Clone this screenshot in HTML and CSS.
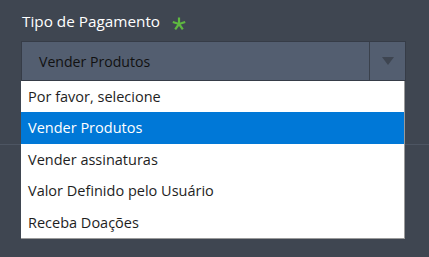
FILE: index.html
```html
<!DOCTYPE html>
<html>
<head>
<meta charset="utf-8">
<link rel="stylesheet" href="styles.css">
</head>
<body>
<div class="page">
  <div class="field">
    <div class="label">Tipo de Pagamento
      <svg class="req" width="14" height="14" viewBox="-7 -7 14 14">
        <g stroke="#5fb840" stroke-width="2.2" stroke-linecap="butt">
          <line x1="0" y1="0" x2="0" y2="-6.5"/>
          <line x1="0" y1="0" x2="6.2" y2="-2"/>
          <line x1="0" y1="0" x2="3.8" y2="5.3"/>
          <line x1="0" y1="0" x2="-3.8" y2="5.3"/>
          <line x1="0" y1="0" x2="-6.2" y2="-2"/>
        </g>
      </svg>
    </div>
    <div class="select-wrap">
      <div class="select">
        <span class="value">Vender Produtos</span>
        <span class="arrow"><svg width="12" height="8" viewBox="0 0 12 8"><polygon points="0,0 12,0 6,8" fill="#3e4551"/></svg></span>
      </div>
      <ul class="menu">
        <li>Por favor, selecione</li>
        <li class="active">Vender Produtos</li>
        <li>Vender assinaturas</li>
        <li>Valor Definido pelo Usuário</li>
        <li>Receba Doações</li>
      </ul>
    </div>
  </div>
  <div class="sep"></div>
</div>
</body>
</html>
```
FILE: styles.css
```css
html, body {
  margin: 0;
  padding: 0;
  background: #3f4651;
  width: 429px;
  height: 257px;
  overflow: hidden;
  font-family: "Open Sans", "Noto Sans", sans-serif;
}
.page {
  padding-top: 10px;
}
.field {
  padding-left: 21px;
}
.label {
  color: #ffffff;
  font-size: 15.3px;
  line-height: 22px;
  height: 31px;
  padding-left: 1px;
  display: flex;
  align-items: flex-start;
}
.req {
  margin-left: 12px;
  margin-top: 7px;
}
.select-wrap {
  position: relative;
  width: 385px;
}
.select {
  height: 38px;
  background: #535e70;
  border: 1px solid #363c47;
  display: flex;
  align-items: center;
}
.value {
  flex: 1;
  padding-left: 17px;
  font-size: 14.1px;
  color: #111;
}
.arrow {
  width: 35px;
  height: 38px;
  border-left: 1px solid #3a414c;
  display: flex;
  align-items: center;
  justify-content: center;
}
.menu {
  position: absolute;
  left: 0;
  top: 40px;
  width: 383px;
  margin: 0;
  padding: 0;
  list-style: none;
  background: #ffffff;
  border-right: 1px solid #9a9a9a;
  border-bottom: 1px solid #9a9a9a;
  z-index: 2;
}
.menu li {
  height: 31.4px;
  line-height: 31.4px;
  padding-left: 7px;
  font-size: 14.5px;
  color: #1e1e1e;
}
.menu li.active {
  background: #0078d7;
  color: #ffffff;
}
.sep {
  margin-top: 63px;
  height: 1px;
  background: #4d5562;
}
```
